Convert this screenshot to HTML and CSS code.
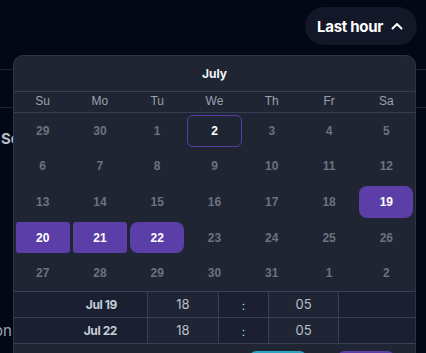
FILE: index.html
```html
<!DOCTYPE html>
<html lang="en">

<head>
  <meta charset="UTF-8" />
  <meta name="viewport" content="width=device-width, initial-scale=1.0" />
  <title>Time range</title>
  <link rel="stylesheet" href="styles.css">
</head>

<body>

  <header class="topbar">
    <button class="range-btn">
      Last hour
      <svg width="14" height="14" viewBox="0 0 14 14" fill="none">
        <path d="M2.5 9.5 L7 5 L11.5 9.5" stroke="#fff" stroke-width="2" stroke-linecap="round" stroke-linejoin="round" />
      </svg>
    </button>
  </header>

  <main class="backdrop">
    <div class="bg-row"></div>
    <div class="bg-row bg-text">Se</div>
    <div class="bg-gap"></div>
    <div class="bg-text bg-lower">on c</div>
  </main>

  <div class="picker">
    <div class="month">July</div>

    <div class="weekdays">
      <span>Su</span><span>Mo</span><span>Tu</span><span>We</span><span>Th</span><span>Fr</span><span>Sa</span>
    </div>

    <div class="days">
      <span class="muted">29</span><span class="muted">30</span><span>1</span><span class="today">2</span><span>3</span><span>4</span><span>5</span>
      <span>6</span><span>7</span><span>8</span><span>9</span><span>10</span><span>11</span><span>12</span>
      <span>13</span><span>14</span><span>15</span><span>16</span><span>17</span><span>18</span><span class="sel start">19</span>
      <span class="sel">20</span><span class="sel">21</span><span class="sel end">22</span><span>23</span><span>24</span><span>25</span><span>26</span>
      <span>27</span><span>28</span><span>29</span><span>30</span><span>31</span><span class="muted">1</span><span class="muted">2</span>
    </div>

    <div class="times">
      <div class="t-label">Jul 19</div>
      <div class="t-val">18</div>
      <div class="t-sep">:</div>
      <div class="t-val">05</div>
      <div class="t-end"></div>

      <div class="t-label">Jul 22</div>
      <div class="t-val">18</div>
      <div class="t-sep">:</div>
      <div class="t-val">05</div>
      <div class="t-end"></div>
    </div>

    <div class="actions">
      <button class="btn-cancel" aria-label="Cancel"></button>
      <button class="btn-apply" aria-label="Apply"></button>
    </div>
  </div>

</body>

</html>
```

FILE: styles.css
```css
body {
  margin: 0;
  width: 426px;
  height: 353px;
  overflow: hidden;
  background-color: #030816;
  font-family: Inter, "Liberation Sans", sans-serif;
  position: relative;
}

.topbar {
  height: 69px;
  box-sizing: border-box;
  display: flex;
  justify-content: flex-end;
  align-items: flex-start;
  padding: 7px 9px 0 0;
}

.range-btn {
  height: 38px;
  padding: 0 13px 0 12px;
  display: flex;
  align-items: center;
  gap: 7px;
  background-color: #121827;
  color: #fff;
  border: none;
  border-radius: 19px;
  font-family: Inter, sans-serif;
  font-size: 15px;
  font-weight: 700;
  letter-spacing: -0.3px;
}

.bg-row {
  height: 37px;
  border-top: 1px solid #1c2334;
}

.bg-text {
  color: #b8bfcc;
  font-size: 15px;
  font-weight: 700;
  padding: 21px 0 0 1px;
  box-sizing: border-box;
}

.bg-gap {
  height: 177px;
}

.bg-lower {
  padding: 0;
  margin-left: -6px;
  font-weight: 400;
  color: #9aa3b3;
}

/* date picker popup */
.picker {
  position: absolute;
  top: 55px;
  left: 13px;
  width: 401px;
  height: 310px;
  background-color: #1f2533;
  border: 1px solid #2d3446;
  border-radius: 10px;
  font-family: "Liberation Sans", Arial, sans-serif;
}

.month {
  height: 35px;
  line-height: 35px;
  text-align: center;
  color: #f1f3f7;
  font-family: Inter, sans-serif;
  font-size: 12px;
  font-weight: 700;
  border-bottom: 1px solid #363e54;
}

.weekdays {
  display: grid;
  grid-template-columns: repeat(7, 1fr);
  height: 20px;
  line-height: 19px;
  border-bottom: 1px solid #363e54;
  color: #9aa1ad;
  font-size: 12px;
  text-align: center;
}

.days {
  display: grid;
  grid-template-columns: repeat(7, 1fr);
  grid-auto-rows: 35.6px;
  padding: 0;
  color: #6b7280;
  font-size: 12px;
  font-weight: 700;
  text-align: center;
}

.days span {
  margin: 2px 1.5px;
  display: flex;
  align-items: center;
  justify-content: center;
  border-radius: 3px;
}

.days .today {
  color: #fff;
  border: 1px solid #5a3ea5;
  border-radius: 6px;
}

.days .sel {
  background-color: #5b3ea8;
  color: #fff;
}

.days .start,
.days .end {
  border-radius: 8px;
}

.times {
  display: grid;
  grid-template-columns: 134px 71px 50px 70px 1fr;
  grid-auto-rows: 25px;
  border-top: 1px solid #364056;
  border-bottom: 1px solid #364056;
  row-gap: 1px;
  background-color: #364056;
  font-family: Inter, sans-serif;
  font-size: 13px;
  color: #b7bfcc;
}

.times div {
  display: flex;
  align-items: center;
  justify-content: center;
  background-color: #1a2031;
  border-right: 1px solid #364056;
}

.times .t-label {
  justify-content: flex-end;
  padding-right: 30px;
  font-size: 12px;
  font-weight: 700;
  letter-spacing: -0.4px;
  color: #c5ccd8;
}

.times .t-val {
  background-color: #1f2534;
}

.times .t-sep {
  color: #9fd6f2;
  font-size: 12px;
  font-weight: 400;
  padding-top: 2px;
}

.times .t-end {
  border-right: none;
}

.actions {
  display: flex;
  gap: 32px;
  padding: 7px 0 0 236px;
}

.actions button {
  width: 56px;
  height: 26px;
  border: none;
  border-radius: 6px;
}

.btn-cancel {
  background-color: #2ea3c2;
}

.btn-apply {
  background-color: #5b3ea8;
}
```
